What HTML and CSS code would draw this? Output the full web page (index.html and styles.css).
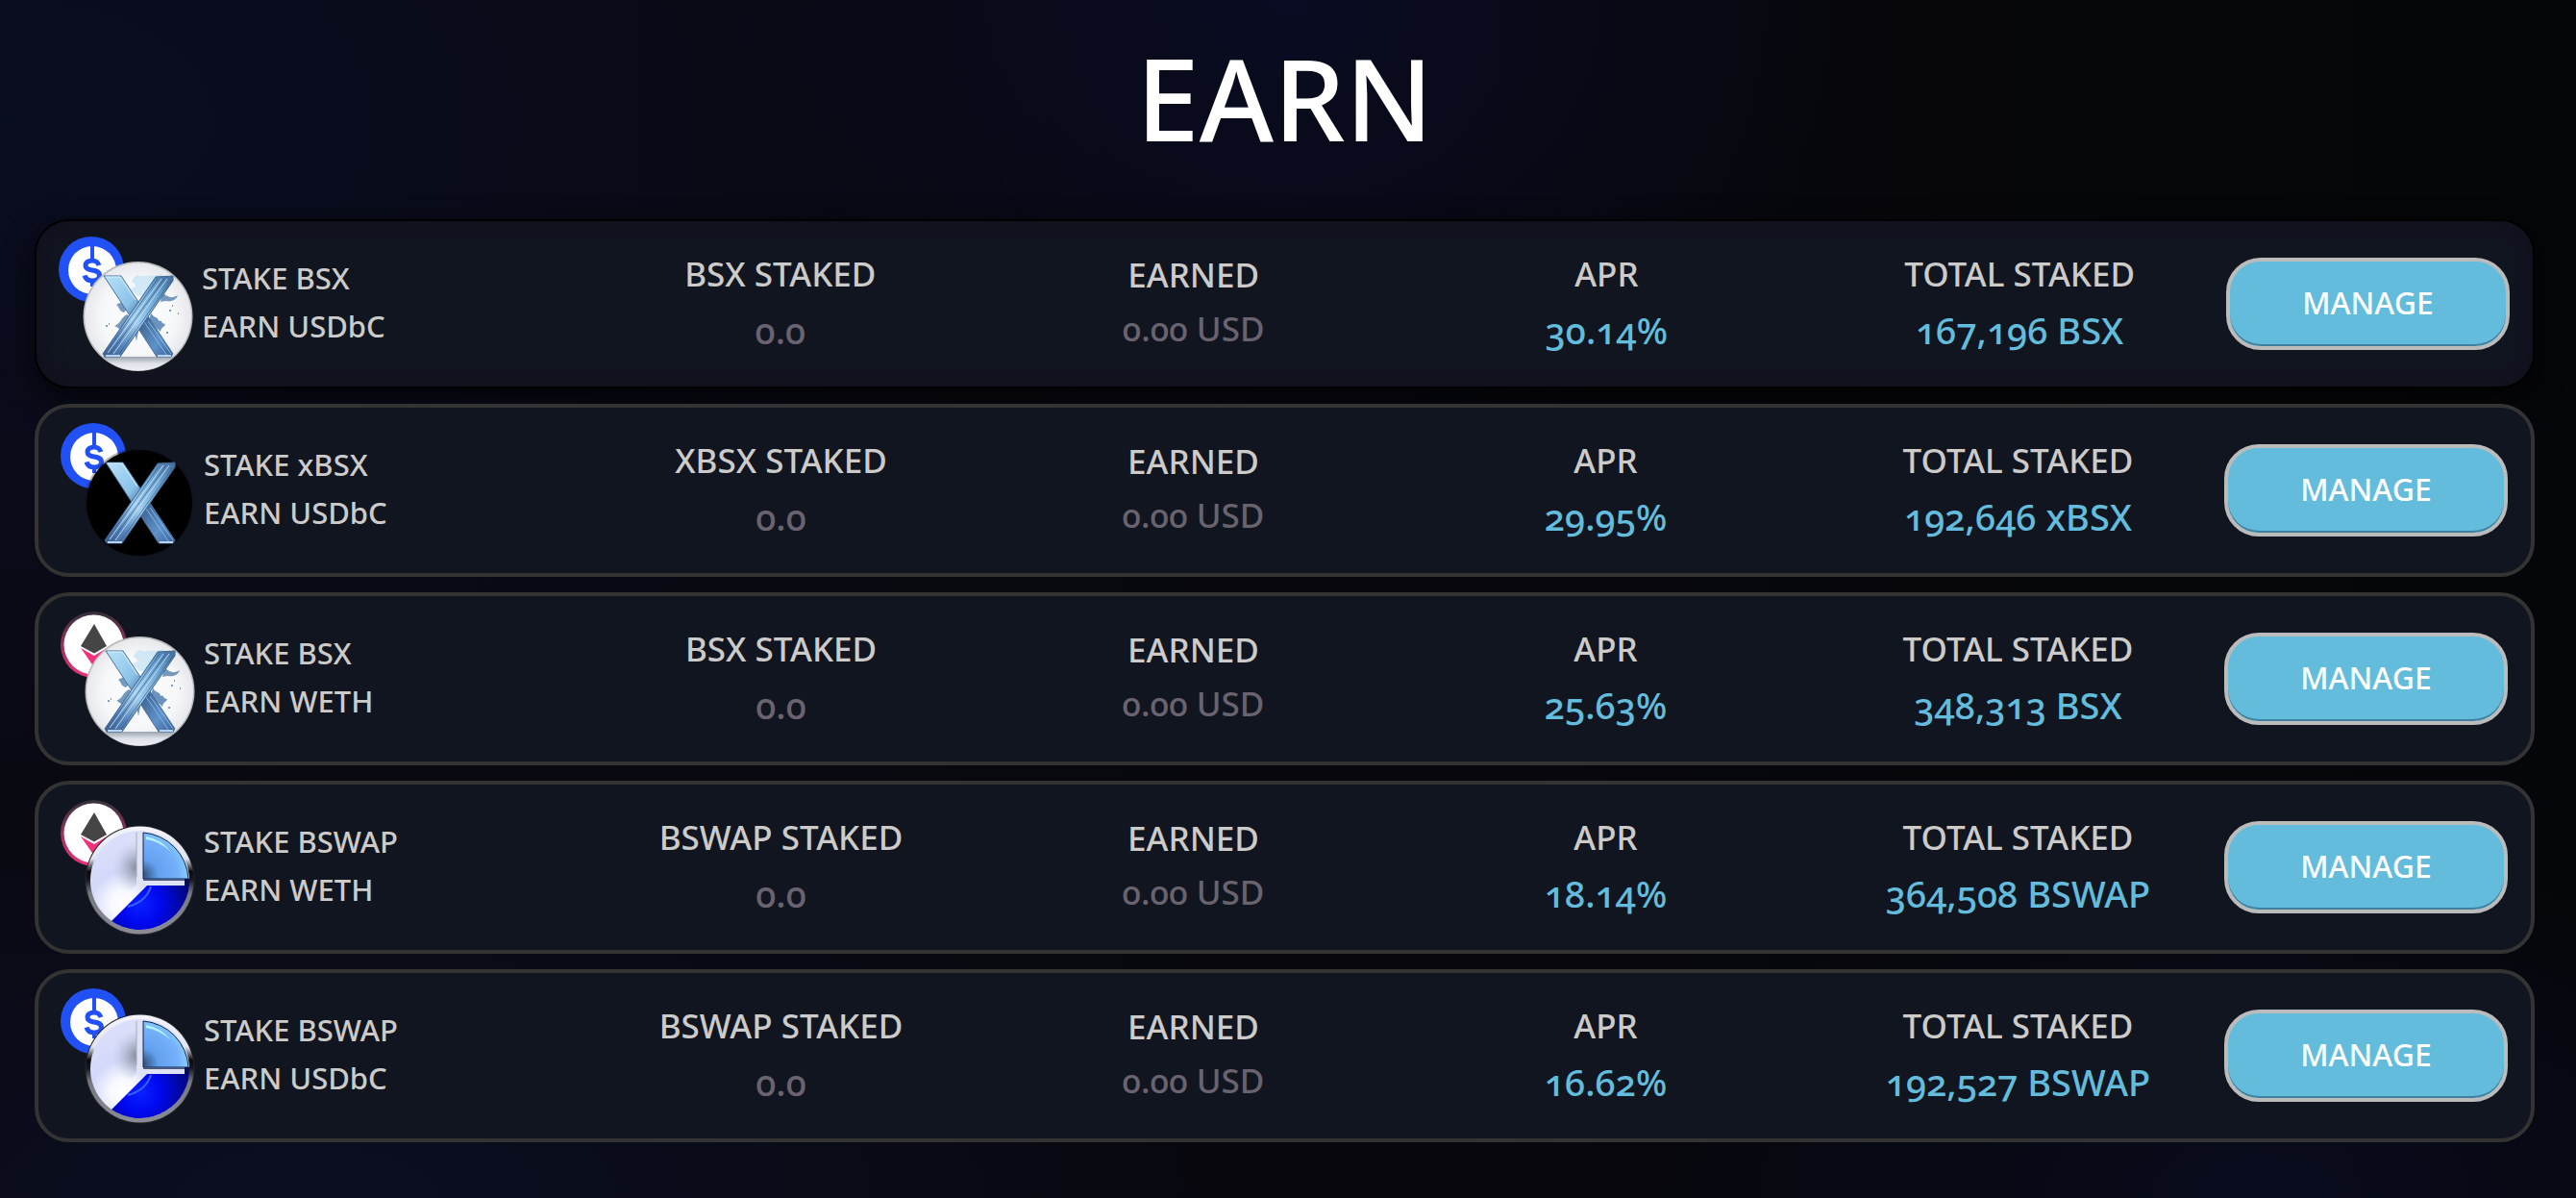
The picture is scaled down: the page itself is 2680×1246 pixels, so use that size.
FILE: index.html
```
<!DOCTYPE html>
<html lang="en">
<head>
<meta charset="utf-8">
<meta name="viewport" content="width=device-width, initial-scale=1">
<title>Earn</title>
<link rel="stylesheet" href="styles.css">
</head>
<body>
<svg class="defs" aria-hidden="true">
  <defs>
    <linearGradient id="barA" x1="0" y1="0" x2="1" y2="1">
      <stop offset="0" stop-color="#b9e2f7"/><stop offset=".35" stop-color="#8cc3ea"/><stop offset=".55" stop-color="#3f6593"/><stop offset=".8" stop-color="#5e92cb"/><stop offset="1" stop-color="#3a5f90"/>
    </linearGradient>
    <linearGradient id="barB" x1="1" y1="0" x2="0" y2="1">
      <stop offset="0" stop-color="#3f6c9c"/><stop offset=".25" stop-color="#6fa6d2"/><stop offset=".55" stop-color="#a0cdee"/><stop offset=".8" stop-color="#5482b8"/><stop offset="1" stop-color="#3d5d90"/>
    </linearGradient>
    <radialGradient id="pearl"><stop offset="0" stop-color="#ffffff"/><stop offset=".7" stop-color="#f6f7f9"/><stop offset="1" stop-color="#e6e8ec"/></radialGradient>
    <linearGradient id="floor" x1="0" y1="0" x2="0" y2="1"><stop offset="0" stop-color="#9aa3ae"/><stop offset=".5" stop-color="#dfe3e9"/><stop offset="1" stop-color="#eceef2"/></linearGradient>
    <linearGradient id="ethRing" x1="0" y1="0" x2="0" y2="1"><stop offset="0" stop-color="#33313a"/><stop offset="1" stop-color="#f0327c"/></linearGradient>
    <linearGradient id="chrome" x1="0" y1="0" x2="0" y2="1"><stop offset="0" stop-color="#f4f5fb"/><stop offset=".3" stop-color="#e2e4ee"/><stop offset=".42" stop-color="#0a0a0c"/><stop offset=".5" stop-color="#1a1a1e"/><stop offset=".62" stop-color="#77787f"/><stop offset="1" stop-color="#8b8c94"/></linearGradient>
    <radialGradient id="glass" gradientUnits="userSpaceOnUse" cx="88" cy="124" r="66"><stop offset="0" stop-color="#ffffff"/><stop offset=".2" stop-color="#f8f9ff"/><stop offset=".5" stop-color="#d3d9fa"/><stop offset="1" stop-color="#dcdffa"/></radialGradient>
    <radialGradient id="shade" gradientUnits="userSpaceOnUse" cx="104" cy="86" r="28"><stop offset="0" stop-color="#76808e" stop-opacity=".95"/><stop offset=".5" stop-color="#98a1b4" stop-opacity=".5"/><stop offset="1" stop-color="#c2c9e4" stop-opacity="0"/></radialGradient>
    <radialGradient id="sky" gradientUnits="userSpaceOnUse" cx="109" cy="94" r="52"><stop offset="0" stop-color="#31507e"/><stop offset=".3" stop-color="#62a0ee"/><stop offset=".7" stop-color="#76b0fb"/><stop offset="1" stop-color="#8ce0fb"/></radialGradient>
    <radialGradient id="deep" gradientUnits="userSpaceOnUse" cx="106" cy="124" r="52"><stop offset="0" stop-color="#0a22ff"/><stop offset=".4" stop-color="#0008f0"/><stop offset="1" stop-color="#03067a"/></radialGradient>
  </defs>

  <symbol id="usdbc" viewBox="0 0 172 172">
    <circle cx="57" cy="50" r="34" fill="#2151f5"/>
    <circle cx="58" cy="51" r="25" fill="#fff"/>
    <path d="M58 23V41M58 61V68" stroke="#2151f5" stroke-width="4"/>
    <path d="M65 46c-1-3-4-5-7-5-4 0-7 2-7 5 0 4 4 4.500 7 5 4 .7 7.500 1.500 7.500 5.500 0 3-3 5.500-7.500 5.500-4 0-7-2-8-5.500" fill="none" stroke="#2151f5" stroke-width="5"/>
  </symbol>

  <symbol id="weth" viewBox="0 0 172 172">
    <circle cx="57.500" cy="50.500" r="34.500" fill="url(#ethRing)"/>
    <circle cx="57.500" cy="50.500" r="31" fill="#fff"/>
    <path d="M58 29 44 52 58 59.500 71 52Z" fill="#454545"/>
    <path d="M44 54 58 62 71 54 58 74Z" fill="#f0327c"/>
  </symbol>

  <symbol id="cross" viewBox="0 0 172 172">
    <path d="M70 57H88L142 138 140 141H125L74 63Z" fill="url(#barA)" stroke="#4b7096" stroke-width="1"/>
    <path d="M72 58H87L103 82" fill="none" stroke="#d7f1fd" stroke-width="1"/>
    <path d="M110 102 136 140M116 104 140 138" stroke="#86b6e6" stroke-width="1"/>
    <path d="M142 57 124 58 69 138 71 141H87L142 62Z" fill="url(#barB)" stroke="#3f658f" stroke-width="1"/>
    <path d="M136 60 80 138M130 60 74 137" stroke="#d4ecfb" stroke-width="1" fill="none" opacity=".8"/>
    <path d="M133 60 76 139M140 62 86 138M126 60 72 137" stroke="#365b8c" stroke-width="1" fill="none" opacity=".7"/>
    <path d="M72 140H87M126 140H140" stroke="#b7d3f4" stroke-width="2"/>
  </symbol>

  <symbol id="bsx" viewBox="0 0 172 172">
    <circle cx="105.500" cy="99" r="57" fill="#b6b7b9"/>
    <circle cx="105.500" cy="99" r="55.500" fill="url(#pearl)"/>
    <path d="M68 141a56 56 0 0 0 75 0Z" fill="url(#floor)"/>
    <path d="M105 56c5 3 9-1 14 1l12-2-14 22-12 1c-4-6-7-3-6-9 4 1 5-2 2-5-4 1-1-6 4-8Z" fill="#b9ddf3" opacity=".6"/>
    <path d="M131 74c5 5 10 7 16 3-2 6-8 7-13 6l-5 1ZM98 87c-6-5-10-3-15 0 4 3 2 6 8 8ZM94 97c-7 4-6 9-13 12 3 0 4 5 8 2l-2 7 9-8 2 10 3-9 3 14 3-15 10 3Z" fill="#5e87b3" opacity=".85"/>
    <path d="M119 95c2 6 8 4 8 9 4-2 2 3 7 3-1 4-4 2-5 8l-12-11Z" fill="#6b93be"/>
    <path d="M75 107h1M72 109h2M141 88h1M138 93h2M147 96h1M93 122h1M135 116h2M119 130h1M88 131h1" stroke="#7b9cc0" stroke-width="2"/>
    <use href="#cross"/>
  </symbol>

  <symbol id="xbsx" viewBox="0 0 172 172">
    <circle cx="105" cy="99" r="57" fill="#0f121b" opacity=".3"/>
    <circle cx="105" cy="99" r="55" fill="#000"/>
    <use href="#cross"/>
  </symbol>

  <symbol id="bswap" viewBox="0 0 172 172">
    <circle cx="105.500" cy="99.500" r="57" fill="#24252b"/>
    <circle cx="105.500" cy="99.500" r="56" fill="url(#chrome)"/>
    <circle cx="105.500" cy="99.500" r="51.500" fill="url(#glass)"/>
    <path d="M102 57V104L92 115H74V57Z" fill="url(#shade)"/>
    <path d="M102 50H109V98H152V105H113L105 108 102 98Z" fill="#dfe2f4"/>
    <path d="M102 50V96" stroke="#a5aab8" stroke-width="1"/>
    <path d="M109 50A51 51 0 0 1 156 98H109Z" fill="url(#sky)" stroke="#11244e" stroke-width="1"/>
    <path d="M112 54q16 3 26 16-12-11-26-13Z" fill="#b4f3fd"/>
    <path d="M109 98H156V100H109Z" fill="#4b5a80"/>
    <path d="M113 105H157A52 52 0 0 1 76 142Z" fill="url(#deep)"/>
    <path d="M117 106q-5 16-24 21" fill="none" stroke="#3a62ff" stroke-width="2"/>
    <path d="M152 98H157V105H152Z" fill="#05104f"/>
  </symbol>
</svg>

<main class="page">
  <h1 class="title">EARN</h1>
  <ul class="pools">
    <li class="pool pool-active">
      <div class="pair">
        <svg class="coins" viewBox="0 0 172 172" aria-hidden="true"><use href="#usdbc"/><use href="#bsx"/></svg>
        <p class="pair-name">STAKE BSX<br>EARN USDbC</p>
      </div>
      <dl class="stat"><dt>BSX STAKED</dt><dd class="muted">0.0</dd></dl>
      <dl class="stat stat-earned"><dt>EARNED</dt><dd class="muted">0.00 USD</dd></dl>
      <dl class="stat"><dt>APR</dt><dd>30.14%</dd></dl>
      <dl class="stat"><dt>TOTAL STAKED</dt><dd>167,196 BSX</dd></dl>
      <button class="manage" type="button">MANAGE</button>
    </li>
    <li class="pool">
      <div class="pair">
        <svg class="coins" viewBox="0 0 172 172" aria-hidden="true"><use href="#usdbc"/><use href="#xbsx"/></svg>
        <p class="pair-name">STAKE xBSX<br>EARN USDbC</p>
      </div>
      <dl class="stat"><dt>XBSX STAKED</dt><dd class="muted">0.0</dd></dl>
      <dl class="stat stat-earned"><dt>EARNED</dt><dd class="muted">0.00 USD</dd></dl>
      <dl class="stat"><dt>APR</dt><dd>29.95%</dd></dl>
      <dl class="stat"><dt>TOTAL STAKED</dt><dd>192,646 xBSX</dd></dl>
      <button class="manage" type="button">MANAGE</button>
    </li>
    <li class="pool">
      <div class="pair">
        <svg class="coins" viewBox="0 0 172 172" aria-hidden="true"><use href="#weth"/><use href="#bsx"/></svg>
        <p class="pair-name">STAKE BSX<br>EARN WETH</p>
      </div>
      <dl class="stat"><dt>BSX STAKED</dt><dd class="muted">0.0</dd></dl>
      <dl class="stat stat-earned"><dt>EARNED</dt><dd class="muted">0.00 USD</dd></dl>
      <dl class="stat"><dt>APR</dt><dd>25.63%</dd></dl>
      <dl class="stat"><dt>TOTAL STAKED</dt><dd>348,313 BSX</dd></dl>
      <button class="manage" type="button">MANAGE</button>
    </li>
    <li class="pool">
      <div class="pair">
        <svg class="coins" viewBox="0 0 172 172" aria-hidden="true"><use href="#weth"/><use href="#bswap"/></svg>
        <p class="pair-name">STAKE BSWAP<br>EARN WETH</p>
      </div>
      <dl class="stat"><dt>BSWAP STAKED</dt><dd class="muted">0.0</dd></dl>
      <dl class="stat stat-earned"><dt>EARNED</dt><dd class="muted">0.00 USD</dd></dl>
      <dl class="stat"><dt>APR</dt><dd>18.14%</dd></dl>
      <dl class="stat"><dt>TOTAL STAKED</dt><dd>364,508 BSWAP</dd></dl>
      <button class="manage" type="button">MANAGE</button>
    </li>
    <li class="pool">
      <div class="pair">
        <svg class="coins" viewBox="0 0 172 172" aria-hidden="true"><use href="#usdbc"/><use href="#bswap"/></svg>
        <p class="pair-name">STAKE BSWAP<br>EARN USDbC</p>
      </div>
      <dl class="stat"><dt>BSWAP STAKED</dt><dd class="muted">0.0</dd></dl>
      <dl class="stat stat-earned"><dt>EARNED</dt><dd class="muted">0.00 USD</dd></dl>
      <dl class="stat"><dt>APR</dt><dd>16.62%</dd></dl>
      <dl class="stat"><dt>TOTAL STAKED</dt><dd>192,527 BSWAP</dd></dl>
      <button class="manage" type="button">MANAGE</button>
    </li>
  </ul>
</main>
</body>
</html>
```
FILE: styles.css
```
* {
  box-sizing: border-box;
}

body {
  margin: 0;
  min-height: 100vh;
  background:
    radial-gradient(ellipse 22% 40% at 50% 0, #090c22, transparent),
    radial-gradient(ellipse 45% 55% at 0 10%, #090d20, transparent),
    radial-gradient(ellipse 35% 30% at 12% 100%, #0a0e20, transparent),
    radial-gradient(ellipse 25% 30% at 88% 100%, #080b1c, transparent),
    linear-gradient(90deg, #090912, #050609);
  color: #cccbc9;
  font-family: "Noto Sans", "Open Sans", sans-serif;
  font-weight: 500;
  font-variant-numeric: oldstyle-nums;
}

.defs {
  position: absolute;
  width: 0;
  height: 0;
}

.page {
  padding: 0 43px 58px 36px;
}

.title {
  margin: 0;
  padding: 22px 0 46px;
  color: #fff;
  font-size: 118px;
  font-weight: 500;
  line-height: 160px;
  text-align: center;
}

.pools {
  display: flex;
  flex-direction: column;
  gap: 16px;
  margin: 0;
  padding: 0;
  list-style: none;
}

.pool {
  display: grid;
  grid-template-columns: 558fr repeat(4, 429fr) 295px;
  align-items: center;
  padding-right: 24px;
  border: 4px solid #333;
  border-radius: 36px;
  background: #111520;
}

.pool-active {
  border: 2px solid #000;
  box-shadow: 0 10px 30px rgba(0, 0, 0, .7), inset 0 0 24px rgba(16, 14, 28, .8);
}

.pair {
  display: flex;
  align-items: center;
}

.coins {
  flex: none;
  width: 172px;
  height: 172px;
}

.pair-name {
  margin: 0;
  padding-bottom: 4px;
  font-size: 31px;
  line-height: 50px;
  white-space: nowrap;
}

.stat {
  margin: 0;
  padding-bottom: 4px;
  font-size: 35px;
  line-height: 58px;
  text-align: center;
  white-space: nowrap;
}

.stat dd {
  margin: 0;
  color: #63bcdb;
  font-size: 38px;
}

.stat .muted {
  color: #69636f;
}

.stat-earned {
  line-height: 56px;
}

.stat-earned .muted {
  font-size: 35px;
}

.manage {
  height: 96px;
  padding: 0 0 4px;
  border: 4px solid #bbb;
  border-radius: 36px;
  background: #63bcdb;
  box-shadow: inset 0 -2px #40809f;
  color: #fff;
  font: inherit;
  font-size: 32px;
}
```
